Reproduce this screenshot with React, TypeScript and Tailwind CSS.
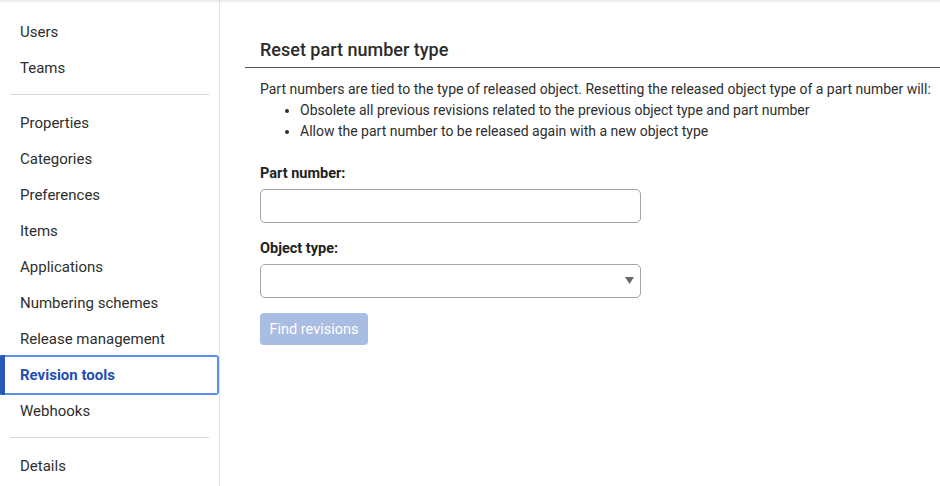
const GROUPS = [
  ['Users', 'Teams'],
  ['Properties', 'Categories', 'Preferences', 'Items', 'Applications', 'Numbering schemes', 'Release management', 'Revision tools', 'Webhooks'],
  ['Details'],
];

const ACTIVE = 'Revision tools';

function NavItem({ label }: { label: string }) {
  if (label === ACTIVE) {
    return (
      <div className="relative -my-[2px] flex h-[40px] items-center rounded-r-[3px] border-2 border-l-0 border-[#5b8ff0] pl-5 text-[15px] font-bold text-[#1f4eb4]">
        <span className="absolute -top-[2px] -bottom-[2px] left-0 w-[5px] rounded-l-[2px] bg-[#2a57b8]" />
        {label}
      </div>
    );
  }
  return <div className="flex h-9 items-center pl-5 text-[15px] text-[#2e2e2e]">{label}</div>;
}

export default function App() {
  return (
    <div className="relative flex h-[486px] w-[940px] overflow-hidden bg-white font-['Roboto',sans-serif] text-[#2e2e2e]">
      {/* top shadow from header above */}
      <div className="pointer-events-none absolute inset-x-0 top-0 h-[3px] bg-gradient-to-b from-black/10 to-transparent" />

      {/* Sidebar */}
      <aside className="w-[220px] shrink-0 border-r border-[#dde3ec] pt-[14px]">
        {GROUPS.map((group, gi) => (
          <div key={gi}>
            {gi > 0 && <div className="mx-[10px] mt-2 mb-[10px] h-px bg-[#d3d6db]" />}
            {group.map((label) => (
              <NavItem key={label} label={label} />
            ))}
          </div>
        ))}
      </aside>

      {/* Main */}
      <main className="flex-1 pt-[38px]">
        <div className="ml-[25px] border-b border-[#555] px-[15px] pb-[5px]">
          <h1 className="text-[18px] font-medium leading-[24px] text-[#2b2b2b]">Reset part number type</h1>
        </div>

        <div className="pl-10 pr-2 pt-[11px] text-[14px] leading-[21px]">
          <p>
            Part numbers are tied to the type of released object. Resetting the released object type of a part number will:
          </p>
          <ul className="ml-[29px] list-disc pl-[11px]">
            <li>Obsolete all previous revisions related to the previous object type and part number</li>
            <li>Allow the part number to be released again with a new object type</li>
          </ul>

          <label className="mt-[21px] block text-[14.5px] font-bold leading-[21px] text-[#222]">Part number:</label>
          <input className="mt-[5px] block h-[34px] w-[381px] rounded-[5px] border border-[#a4a4a4] bg-white" />

          <label className="mt-[15px] block text-[14.5px] font-bold leading-[21px] text-[#222]">Object type:</label>
          <div className="relative mt-[5px] h-[34px] w-[381px] rounded-[5px] border border-[#a4a4a4] bg-white">
            <svg className="absolute right-[6px] top-[12px]" width="9" height="8" viewBox="0 0 9 8">
              <path d="M0 0 H9 L4.5 7 Z" fill="#666" />
            </svg>
          </div>

          <button className="mt-[15px] h-[32px] w-[108px] rounded-[4px] bg-[#a9bce2] text-[14.5px] text-white">
            Find revisions
          </button>
        </div>
      </main>
    </div>
  );
}
